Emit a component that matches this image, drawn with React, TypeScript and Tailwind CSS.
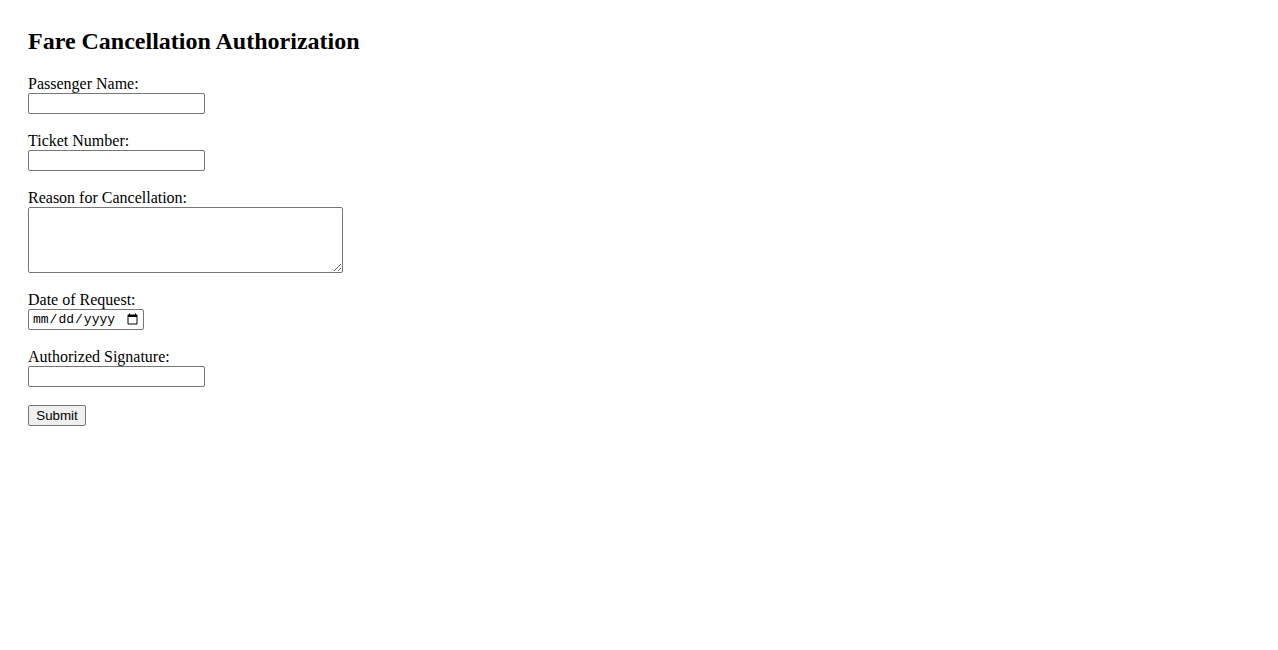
import React from 'react'

const inputCls =
  'block w-[177px] h-[21px] border border-[#767676] rounded-[2px] bg-white px-[2px] text-[13px] font-["Liberation_Sans",Arial,sans-serif]'

const Field: React.FC<{ label: string; children: React.ReactNode }> = ({ label, children }) => (
  <div className="flex flex-col items-start mb-[18px]">
    <label className="block text-[16px] leading-[18px]">{label}</label>
    {children}
  </div>
)

export default function App() {
  return (
    <div className="min-h-screen bg-white text-black pt-[27px] pl-[28px] font-['Liberation_Serif','Times_New_Roman',serif]">
      <h2 className="text-[24px] font-bold leading-[28px] mb-[20px]">Fare Cancellation Authorization</h2>

      <form className="flex flex-col items-start" onSubmit={(e) => e.preventDefault()}>
        <Field label="Passenger Name:">
          <input type="text" className={inputCls} />
        </Field>

        <Field label="Ticket Number:">
          <input type="text" className={inputCls} />
        </Field>

        <Field label="Reason for Cancellation:">
          <textarea className="block w-[315px] h-[66px] border border-[#767676] rounded-[2px] bg-white p-[2px] text-[13px] font-['Liberation_Mono',monospace]" />
        </Field>

        <Field label="Date of Request:">
          <input
            type="date"
            className="block w-[116px] h-[21px] border border-[#767676] rounded-[2px] bg-white pl-[3px] pr-[2px] text-[13px] font-['Liberation_Mono','DejaVu_Sans_Mono',monospace]"
          />
        </Field>

        <Field label="Authorized Signature:">
          <input type="text" className={inputCls} />
        </Field>

        <button
          type="submit"
          className="h-[21px] w-[58px] border border-[#767676] rounded-[2px] bg-[#efefef] text-[13.33px] leading-[15px] font-['Liberation_Sans',Arial,sans-serif]"
        >
          Submit
        </button>
      </form>
    </div>
  )
}
